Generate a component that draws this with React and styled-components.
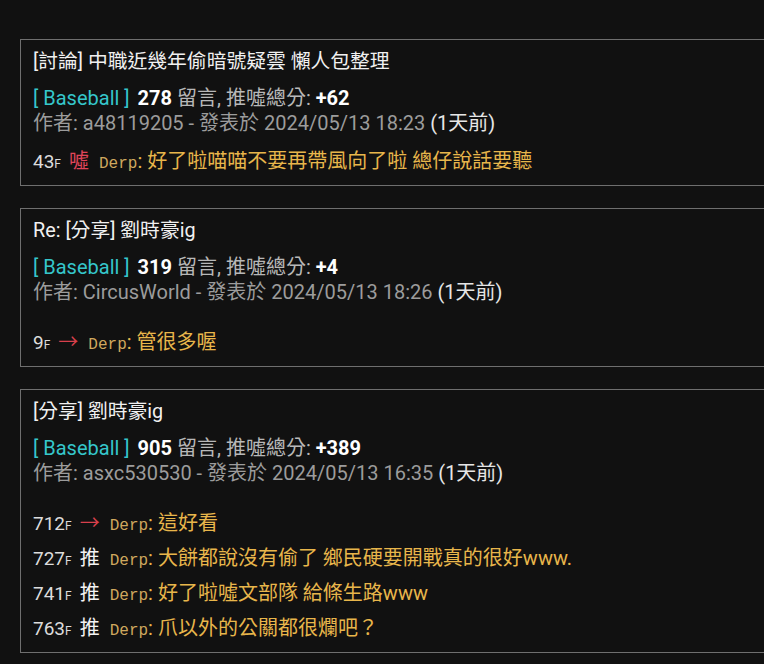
import React from "react";
import styled, { createGlobalStyle } from "styled-components";

const Global = createGlobalStyle`
  html, body {
    margin: 0;
    padding: 0;
    background: #111111;
    overflow: hidden;
  }
  body {
    font-family: Roboto, "Noto Sans CJK TC", sans-serif;
  }
`;

const Page = styled.div`
  display: flex;
  flex-direction: column;
  gap: 22px;
  padding: 39px 0 0 20px;
  width: 800px;
`;

const Card = styled.section`
  border: 1px solid #6f6f6f;
  background: #111111;
  padding: 10px 12px 12px 12px;
  display: flex;
  flex-direction: column;
`;

const Line = styled.div`
  font-size: 20px;
  height: 24px;
  line-height: 24px;
  white-space: nowrap;
`;

const Title = styled(Line)`
  color: #f0f0f0;
  font-size: 19.8px;
  margin-bottom: 12px;
`;

const Meta = styled(Line)`
  color: #b8b8b8;
  height: 25px;
`;

const Board = styled.span`
  color: #35c6cb;
  margin-right: 3px;
`;

const Strong = styled.span`
  color: #ffffff;
  font-weight: 700;
`;

const Author = styled(Line)`
  color: #9c9c9c;
`;

const Ago = styled.span`
  color: #e6e6e6;
  margin-left: 5px;
`;

const Comments = styled.div`
  display: flex;
  flex-direction: column;
  gap: 11px;
  margin-top: ${(p) => (p.$spaced ? 26 : 14)}px;
`;

const Row = styled(Line)`
  display: flex;
  align-items: baseline;
`;

const Floor = styled.span`
  color: #dcdcdc;
  font-size: 19px;
`;

const FloorF = styled.span`
  color: #dcdcdc;
  font-size: 12px;
  margin-right: 8px;
`;

const tagColors = {
  boo: "#e0455a",
  arrow: "#d8404c",
  push: "#f4f4f4",
};

const Tag = styled.span`
  color: ${(p) => tagColors[p.$kind]};
  margin-right: 10px;
`;

const User = styled.span`
  font-family: "Liberation Mono", "DejaVu Sans Mono", monospace;
  font-size: 16px;
  color: #cfa85e;
`;

const Text = styled.span`
  color: #e8b64b;
`;

const posts = [
  {
    title: "[討論] 中職近幾年偷暗號疑雲 懶人包整理",
    count: 278,
    score: "+62",
    author: "a48119205",
    time: "2024/05/13 18:23",
    spaced: false,
    comments: [{ floor: 43, kind: "boo", text: "好了啦喵喵不要再帶風向了啦 總仔說話要聽" }],
  },
  {
    title: "Re: [分享] 劉時豪ig",
    count: 319,
    score: "+4",
    author: "CircusWorld",
    time: "2024/05/13 18:26",
    spaced: true,
    comments: [{ floor: 9, kind: "arrow", text: "管很多喔" }],
  },
  {
    title: "[分享] 劉時豪ig",
    count: 905,
    score: "+389",
    author: "asxc530530",
    time: "2024/05/13 16:35",
    spaced: true,
    comments: [
      { floor: 712, kind: "arrow", text: "這好看" },
      { floor: 727, kind: "push", text: "大餅都說沒有偷了 鄉民硬要開戰真的很好www." },
      { floor: 741, kind: "push", text: "好了啦噓文部隊 給條生路www" },
      { floor: 763, kind: "push", text: "爪以外的公關都很爛吧？" },
    ],
  },
];

const tagText = { boo: "噓", arrow: "→", push: "推" };

export default function App() {
  return (
    <>
      <Global />
      <Page>
        {posts.map((p) => (
          <Card key={p.title}>
            <Title>{p.title}</Title>
            <Meta>
              <Board>[ Baseball ]</Board> <Strong>{p.count}</Strong> 留言, 推噓總分:{" "}
              <Strong>{p.score}</Strong>
            </Meta>
            <Author>
              作者: {p.author} - 發表於 {p.time}
              <Ago>(1天前)</Ago>
            </Author>
            <Comments $spaced={p.spaced}>
              {p.comments.map((c) => (
                <Row key={c.floor}>
                  <Floor>{c.floor}</Floor>
                  <FloorF>F</FloorF>
                  <Tag $kind={c.kind}>{tagText[c.kind]}</Tag>
                  <User>Derp</User>
                  <Text>: {c.text}</Text>
                </Row>
              ))}
            </Comments>
          </Card>
        ))}
      </Page>
    </>
  );
}
